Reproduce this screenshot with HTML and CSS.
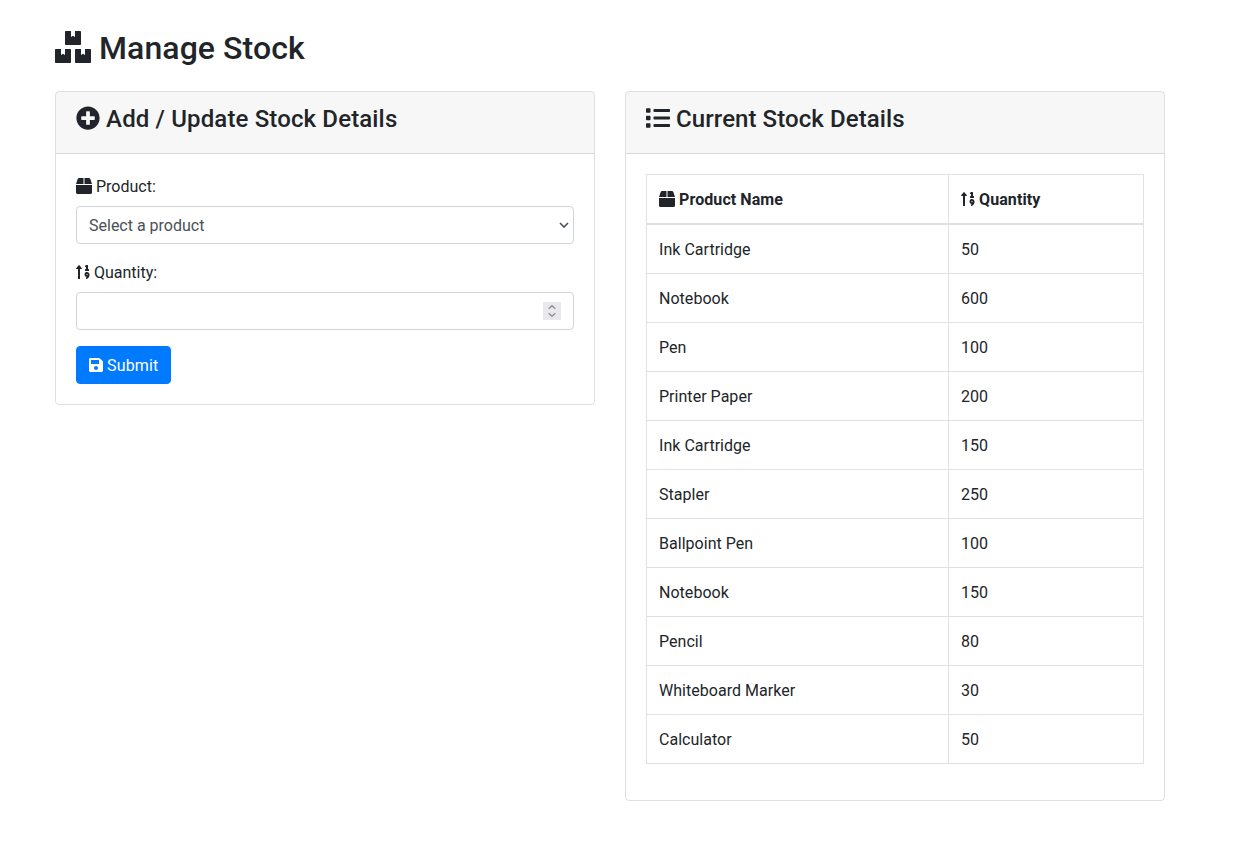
FILE: index.html
```html
<!DOCTYPE html>
<html lang="en">
<head>
<meta charset="utf-8">
<title>Manage Stock</title>
<link rel="stylesheet" href="styles.css">
</head>
<body>
<svg class="sprite" aria-hidden="true">
  <symbol id="boxes" viewBox="0 0 576 512"><path d="M560 288h-80v96l-32-21.3-32 21.3v-96h-80c-8.8 0-16 7.2-16 16v192c0 8.8 7.2 16 16 16h224c8.8 0 16-7.2 16-16V304c0-8.8-7.2-16-16-16zm-384-64h224c8.8 0 16-7.2 16-16V16c0-8.8-7.2-16-16-16h-80v96l-32-21.3L256 96V0h-80c-8.8 0-16 7.2-16 16v192c0 8.8 7.2 16 16 16zm64 64h-80v96l-32-21.3L96 384v-96H16c-8.8 0-16 7.2-16 16v192c0 8.8 7.2 16 16 16h224c8.8 0 16-7.2 16-16V304c0-8.8-7.2-16-16-16z"/></symbol>
  <symbol id="plus" viewBox="0 0 512 512"><path d="M256 8C119 8 8 119 8 256s111 248 248 248 248-111 248-248S393 8 256 8zm144 276c0 6.6-5.4 12-12 12h-92v92c0 6.6-5.4 12-12 12h-56c-6.6 0-12-5.4-12-12v-92h-92c-6.6 0-12-5.4-12-12v-56c0-6.6 5.4-12 12-12h92v-92c0-6.6 5.4-12 12-12h56c6.6 0 12 5.4 12 12v92h92c6.6 0 12 5.4 12 12v56z"/></symbol>
  <symbol id="box" viewBox="0 0 512 512"><path d="M509.5 184.6L458.9 32.8C452.4 13.2 434.1 0 413.4 0H272v192h238.7c-.4-2.5-.4-5-1.2-7.4zM240 0H98.6c-20.7 0-39 13.2-45.5 32.8L2.5 184.6c-.8 2.4-.8 4.9-1.2 7.4H240V0zM0 224v240c0 26.5 21.5 48 48 48h416c26.5 0 48-21.5 48-48V224H0z"/></symbol>
  <symbol id="save" viewBox="0 0 448 512"><path d="M433.941 129.941l-83.882-83.882A48 48 0 0 0 316.118 32H48C21.49 32 0 53.49 0 80v352c0 26.51 21.49 48 48 48h352c26.51 0 48-21.49 48-48V163.882a48 48 0 0 0-14.059-33.941zM224 416c-35.346 0-64-28.654-64-64 0-35.346 28.654-64 64-64s64 28.654 64 64c0 35.346-28.654 64-64 64zm96-304.52V212c0 6.627-5.373 12-12 12H76c-6.627 0-12-5.373-12-12V108c0-6.627 5.373-12 12-12h228.52c3.183 0 6.235 1.264 8.485 3.515l3.48 3.48A11.996 11.996 0 0 1 320 111.48z"/></symbol>
  <symbol id="list" viewBox="0 0 512 512"><path d="M80 368H16a16 16 0 0 0-16 16v64a16 16 0 0 0 16 16h64a16 16 0 0 0 16-16v-64a16 16 0 0 0-16-16zm0-320H16A16 16 0 0 0 0 64v64a16 16 0 0 0 16 16h64a16 16 0 0 0 16-16V64a16 16 0 0 0-16-16zm0 160H16a16 16 0 0 0-16 16v64a16 16 0 0 0 16 16h64a16 16 0 0 0 16-16v-64a16 16 0 0 0-16-16zm416 176H176a16 16 0 0 0-16 16v32a16 16 0 0 0 16 16h320a16 16 0 0 0 16-16v-32a16 16 0 0 0-16-16zm0-320H176a16 16 0 0 0-16 16v32a16 16 0 0 0 16 16h320a16 16 0 0 0 16-16V80a16 16 0 0 0-16-16zm0 160H176a16 16 0 0 0-16 16v32a16 16 0 0 0 16 16h320a16 16 0 0 0 16-16v-32a16 16 0 0 0-16-16z"/></symbol>
  <symbol id="sort" viewBox="0 0 448 512"><path d="M304 96h16v64h-16a16 16 0 0 0-16 16v32a16 16 0 0 0 16 16h96a16 16 0 0 0 16-16v-32a16 16 0 0 0-16-16h-16V48a16 16 0 0 0-16-16h-48a16 16 0 0 0-14.29 8.83l-16 32A16 16 0 0 0 304 96zm26.15 162.91a79 79 0 0 0-55 54.17c-14.25 51.05 21.21 97.77 68.85 102.53a84.07 84.07 0 0 1-20.85 12.91c-7.57 3.4-10.8 12.47-8.18 20.34l9.9 20c2.87 8.63 12.53 13.49 20.9 9.91 58-24.76 86.25-61.66 86.25-132V336c-.02-51.21-48.4-91.34-101.85-77.09zM352 356a20 20 0 1 1 20-20 20 20 0 0 1-20 20zM16 160h48v304a16 16 0 0 0 16 16h32a16 16 0 0 0 16-16V160h48c14.21 0 21.38-17.24 11.31-27.31l-80-96a16 16 0 0 0-22.62 0l-80 96C-5.35 142.74 1.78 160 16 160z"/></symbol>
</svg>
<main class="container">
  <h2 class="page-title"><svg class="icon icon-wide"><use href="#boxes"/></svg> Manage Stock</h2>
  <div class="row">
    <section class="card">
      <div class="card-header"><h4 class="card-title card-title-form"><svg class="icon"><use href="#plus"/></svg> Add / Update Stock Details</h4></div>
      <form class="card-body">
        <div class="form-group">
          <label class="label" for="product"><svg class="icon"><use href="#box"/></svg> Product:</label>
          <div class="field">
            <select class="form-control" id="product"><option>Select a product</option></select>
            <svg class="chevron" viewBox="0 0 10 6"><path d="M1 1l4 4 4-4"/></svg>
          </div>
        </div>
        <div class="form-group">
          <label class="label" for="quantity"><svg class="icon icon-narrow"><use href="#sort"/></svg> Quantity:</label>
          <div class="field">
            <input class="form-control" id="quantity" type="text" inputmode="numeric">
            <svg class="spinner" viewBox="0 0 18 18"><path d="M5.7 6.7L9 3.7l3.3 3M5.7 11.3l3.3 3 3.3-3"/></svg>
          </div>
        </div>
        <button class="btn" type="button"><svg class="icon icon-narrow"><use href="#save"/></svg> Submit</button>
      </form>
    </section>
    <section class="card">
      <div class="card-header"><h4 class="card-title"><svg class="icon"><use href="#list"/></svg> Current Stock Details</h4></div>
      <div class="card-body">
        <table class="table">
          <thead><tr><th class="col-name"><svg class="icon"><use href="#box"/></svg> Product Name</th><th><svg class="icon icon-narrow"><use href="#sort"/></svg> Quantity</th></tr></thead>
          <tbody>
            <tr><td>Ink Cartridge</td><td>50</td></tr>
            <tr><td>Notebook</td><td>600</td></tr>
            <tr><td>Pen</td><td>100</td></tr>
            <tr><td>Printer Paper</td><td>200</td></tr>
            <tr><td>Ink Cartridge</td><td>150</td></tr>
            <tr><td>Stapler</td><td>250</td></tr>
            <tr><td>Ballpoint Pen</td><td>100</td></tr>
            <tr><td>Notebook</td><td>150</td></tr>
            <tr><td>Pencil</td><td>80</td></tr>
            <tr><td>Whiteboard Marker</td><td>30</td></tr>
            <tr><td>Calculator</td><td>50</td></tr>
          </tbody>
        </table>
      </div>
    </section>
  </div>
</main>
</body>
</html>
```
FILE: styles.css
```css
*, *::before, *::after { box-sizing: border-box; }
body {
  margin: 0;
  padding-right: 15px;
  font: 400 16px/1.5 Roboto, sans-serif;
  color: #212529;
  background: #fff;
}
.sprite { display: none; }
.container { width: 1110px; margin: 0 auto; padding-top: 28.8px; }
.page-title { margin: 0 0 24px; font-size: 32px; font-weight: 500; line-height: 1.2; letter-spacing: .08px; }
.icon { display: inline-block; width: 1em; height: 1em; fill: currentColor; vertical-align: -0.125em; }
.icon-wide { width: 1.125em; }
.icon-narrow { width: 0.875em; }
.row { display: grid; grid-template-columns: 1fr 1fr; gap: 30px; align-items: start; }
.card { border: 1px solid rgba(0, 0, 0, .125); border-radius: 4px; }
.card-header {
  padding: 13px 20px 11px;
  background: rgba(0, 0, 0, .03);
  border-bottom: 1px solid rgba(0, 0, 0, .125);
  border-radius: 3px 3px 0 0;
}
.card-title { margin: 0 0 8px; font-size: 24px; font-weight: 500; line-height: 1.2; letter-spacing: .08px; }
.card-title-form { letter-spacing: .14px; }
.card-body { padding: 20px; }
.form-group { margin-bottom: 16px; }
.label { display: block; padding-top: 1px; margin-bottom: 7px; }
.field { position: relative; }
.form-control {
  display: block;
  width: 100%;
  height: 38px;
  padding: 7px 12px 5px;
  font: inherit;
  color: #495057;
  background: #fff;
  border: 1px solid #ced4da;
  border-radius: 4px;
  appearance: none;
}
.chevron { position: absolute; right: 5px; top: 16px; width: 10px; height: 6px; fill: none; stroke: #495057; stroke-width: 1.6; }
.spinner { position: absolute; right: 13px; top: 10px; width: 18px; height: 18px; background: #e9e9ed; fill: none; stroke: #8f8f9d; stroke-width: 1.5; }
.btn {
  display: block;
  padding: 7px 12px 5px;
  font: inherit;
  letter-spacing: .12px;
  color: #fff;
  background: #007bff;
  border: 1px solid #007bff;
  border-radius: 4px;
}
.table { width: 100%; margin-bottom: 16px; border-collapse: collapse; table-layout: fixed; }
.table th, .table td { padding: 13px 12px 11px; border: 1px solid #dee2e6; text-align: left; vertical-align: top; }
.table td { letter-spacing: .03px; }
.table th { font-weight: 700; border-bottom-width: 2px; letter-spacing: .08px; }
.col-name { width: 302px; }
```
